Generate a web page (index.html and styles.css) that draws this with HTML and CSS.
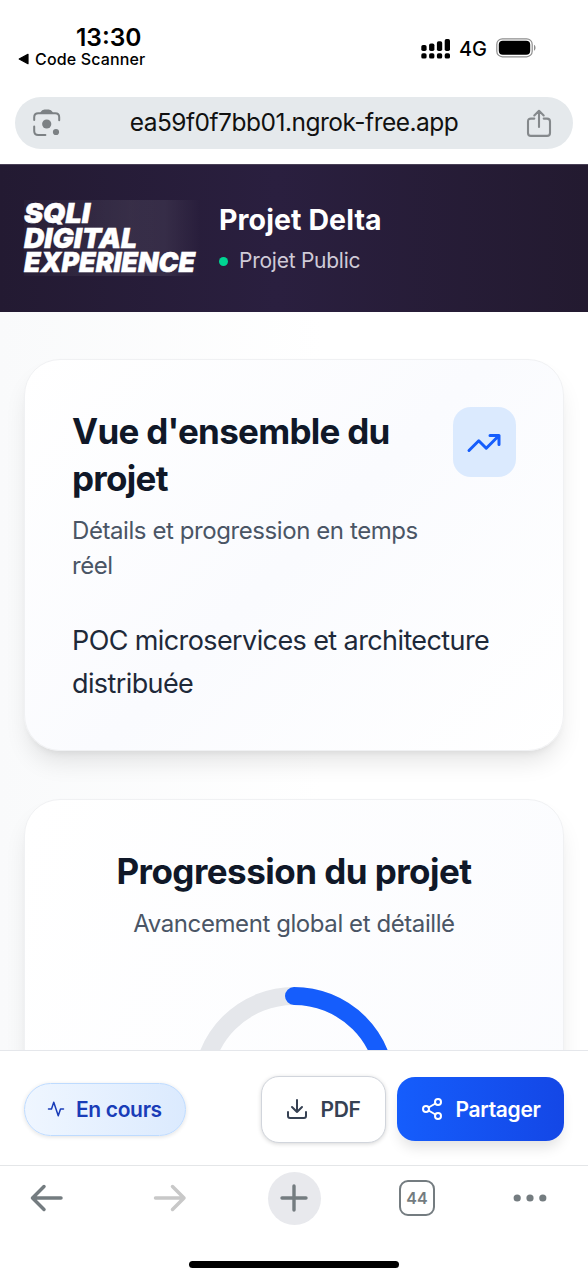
FILE: index.html
```html
<!DOCTYPE html>
<html lang="fr">
<head>
<meta charset="utf-8">
<title>Projet Delta</title>
<link rel="stylesheet" href="styles.css">
</head>
<body>
<div class="phone">
  <div class="status">
    <div class="status-left">
      <div class="clock">13:30</div>
      <div class="back-app"><svg width="12" height="12" viewBox="0 0 12 12"><path d="M1.2 6 10 1.3v9.4z" fill="#000" stroke="#000" stroke-width="1.2" stroke-linejoin="round"/></svg><span>Code Scanner</span></div>
    </div>
    <div class="status-right">
      <svg width="30" height="21" viewBox="0 0 30 21"><rect x="0.3" y="7" width="5.300" height="6" rx="1.700"/><rect x="8.1" y="5.6" width="5.300" height="7.4" rx="1.700"/><rect x="15.900" y="3.3" width="5.300" height="9.7" rx="1.700"/><rect x="23.700" y="1" width="5.300" height="12" rx="1.700"/><rect x="0.3" y="15.300" width="5.300" height="5.300" rx="1.700"/><rect x="8.1" y="15.300" width="5.300" height="5.300" rx="1.700"/><rect x="15.900" y="15.300" width="5.300" height="5.300" rx="1.700"/><rect x="23.700" y="15.300" width="5.300" height="5.300" rx="1.700"/></svg>
      <span class="network">4G</span>
      <svg width="40" height="20" viewBox="0 0 40 20"><rect x="0.8" y="0.8" width="35.4" height="18" rx="5.6" fill="none" stroke="#8d8d8d" stroke-width="1.2"/><rect x="2.8" y="2.8" width="31.4" height="14" rx="4"/><path d="M38 6.8c2 .8 2 5.2 0 6z" fill="#8d8d8d"/></svg>
    </div>
  </div>
  <div class="address">
    <svg width="30" height="30" viewBox="0 0 30 30" fill="none" stroke="#7c8184" stroke-width="2" stroke-linecap="round"><path d="M2.2 12V9.300q0-4 4-4h17q4 0 4 4v3M2.2 18.500v4.500q0 4 4 4h7.200"/><path d="M9.500 4.500q1-2 3-2h4.200q2 0 3 2z" fill="#7c8184"/><circle cx="14.700" cy="16" r="4.600" fill="#7c8184" stroke="none"/><circle cx="24" cy="24" r="3.100" fill="#7c8184" stroke="none"/></svg>
    <span class="url">ea59f0f7bb01.ngrok-free.app</span>
    <svg width="26" height="30" viewBox="0 0 26 30" fill="none" stroke="#85898c" stroke-width="2.100" stroke-linecap="round" stroke-linejoin="round"><path d="M8.300 10.600H5q-3 0-3 3v11.300q0 3 3 3h16q3 0 3-3V13.600q0-3-3-3h-3.300M13 19V3.300M8.300 7.500 13 2.800 17.700 7.500"/></svg>
  </div>
  <header class="header">
    <svg class="logo" width="176" height="76" viewBox="0 0 176 76">
      <text x="0" y="22.700" textLength="66" lengthAdjust="spacingAndGlyphs">SQLI</text>
      <text x="0" y="47.500" textLength="113" lengthAdjust="spacingAndGlyphs">DIGITAL</text>
      <text x="0" y="72.200" textLength="171" lengthAdjust="spacingAndGlyphs">EXPERIENCE</text>
    </svg>
    <div class="project">
      <h1>Projet Delta</h1>
      <p><i class="dot"></i>Projet Public</p>
    </div>
  </header>
  <main class="content">
    <section class="card overview">
      <div class="overview-head">
        <div class="overview-text">
          <h2>Vue d'ensemble du projet</h2>
          <p class="sub">Détails et progression en temps réel</p>
        </div>
        <div class="trend"><svg width="36" height="36" viewBox="0 0 24 24" fill="none" stroke="#155dfc" stroke-width="2" stroke-linecap="round" stroke-linejoin="round"><path d="M16 7h6v6M22 7l-8.500 8.500-5-5L2 17"/></svg></div>
      </div>
      <p class="desc">POC microservices et architecture distribuée</p>
    </section>
    <section class="card progress">
      <h2>Progression du projet</h2>
      <p class="sub">Avancement global et détaillé</p>
      <svg class="ring" width="204" height="204" viewBox="0 0 204 204" fill="none" stroke-width="18"><circle cx="102" cy="102" r="92" stroke="#e5e7eb"/><path d="M102 10a92 92 0 0 1 0 184" stroke="#155dfc" stroke-linecap="round"/></svg>
    </section>
  </main>
  <div class="actions">
    <div class="badge"><svg width="18" height="18" viewBox="0 0 24 24" fill="none" stroke="#193cb8" stroke-width="2" stroke-linecap="round" stroke-linejoin="round"><path d="M22 12h-4l-3 9L9 3l-3 9H2"/></svg>En cours</div>
    <button class="btn pdf"><svg width="24" height="24" viewBox="0 0 24 24" fill="none" stroke="#364153" stroke-width="2" stroke-linecap="round" stroke-linejoin="round"><path d="M21 15v4a2 2 0 0 1-2 2H5a2 2 0 0 1-2-2v-4M7 10l5 5 5-5M12 15V3"/></svg>PDF</button>
    <button class="btn share"><svg width="24" height="24" viewBox="0 0 24 24" fill="none" stroke="#fff" stroke-width="2" stroke-linecap="round" stroke-linejoin="round"><circle cx="18" cy="5" r="3"/><circle cx="6" cy="12" r="3"/><circle cx="18" cy="19" r="3"/><path d="m8.590 13.510 6.830 3.980M15.410 6.510l-6.820 3.980"/></svg>Partager</button>
  </div>
  <nav class="toolbar">
    <div class="tools">
      <svg width="34" height="28" viewBox="0 0 34 28" fill="none" stroke="#747c80" stroke-width="3.500" stroke-linecap="round" stroke-linejoin="round"><path d="M31 14H2.500M14 2.500 2.500 14l11.500 11.500"/></svg>
      <svg width="34" height="28" viewBox="0 0 34 28" fill="none" stroke="#c8c8c8" stroke-width="3.500" stroke-linecap="round" stroke-linejoin="round"><path d="M2.500 14H31M19.500 2.500 31 14 19.500 25.500"/></svg>
      <div class="plus"><svg width="28" height="28" viewBox="0 0 28 28" stroke="#747c80" stroke-width="3.400" stroke-linecap="round"><path d="M2 14h24M14 2v24"/></svg></div>
      <div class="tabs">44</div>
      <svg width="34" height="8" viewBox="0 0 34 8" fill="#747c80"><circle cx="4.200" cy="4" r="3.600"/><circle cx="17" cy="4" r="3.600"/><circle cx="29.800" cy="4" r="3.600"/></svg>
    </div>
    <div class="home"></div>
  </nav>
</div>
</body>
</html>
```

FILE: styles.css
```css
* { box-sizing: border-box; }
body, h1, h2, p { margin: 0; }
svg { display: block; flex: none; }
body {
  background: #fff;
  font-family: Inter, "Liberation Sans", sans-serif;
}
.phone {
  width: 588px;
  height: 1280px;
  display: flex;
  flex-direction: column;
  overflow: hidden;
}
.status {
  height: 97px;
  flex: none;
  display: flex;
  justify-content: space-between;
  padding: 22px 52px 0 18px;
  color: #000;
}
.clock {
  margin-left: 58px;
  font-size: 24.500px;
  line-height: 31px;
  font-weight: 600;
}
.back-app {
  display: flex;
  align-items: center;
  gap: 5px;
  font-size: 16px;
  line-height: 11px;
  font-weight: 500;
  letter-spacing: 0.15px;
}
.status-right {
  display: flex;
  align-items: center;
  height: 52px;
}
.network {
  margin: 0 9px 0 8px;
  font-size: 20px;
  line-height: 24px;
  padding-top: 1px;
  font-weight: 500;
}
.address {
  flex: none;
  height: 52px;
  margin: 0 15px 15px;
  padding: 0 21px 0 17px;
  border-radius: 26px;
  background: #e5e9ec;
  display: flex;
  align-items: center;
  justify-content: space-between;
}
.url {
  padding-bottom: 2px;
  font-size: 24.500px;
  line-height: 30px;
  letter-spacing: -0.500px;
  color: #111;
  white-space: nowrap;
}
.header {
  flex: none;
  height: 148px;
  padding: 0 24px;
  display: flex;
  align-items: center;
  background: linear-gradient(90deg, #231a32 0%, #2a1f3f 47%, #231a30 100%);
  border-top: 1px solid #494056;
}
.logo {
  margin: 0 19px 2px 0;
  overflow: visible;
  background: linear-gradient(90deg, rgba(255,255,255,.02), rgba(255,255,255,.08) 60%, rgba(255,255,255,.07) 80%, transparent);
}
.logo text {
  font-family: Inter, sans-serif;
  font-weight: 900;
  font-style: italic;
  font-size: 27.500px;
  fill: #fff;
  stroke: #fff;
  stroke-width: 0.500px;
}
.project h1 {
  color: #fff;
  font-size: 28.500px;
  line-height: 38px;
  font-weight: 700;
  letter-spacing: 0.100px;
}
.project p {
  display: flex;
  align-items: center;
  margin-top: 7px;
  color: #d0cbd8;
  font-size: 21px;
  line-height: 30px;
  letter-spacing: -0.250px;
}
.dot {
  width: 9px;
  height: 9px;
  border-radius: 50%;
  background: #00d492;
  margin-right: 11px;
}
.content {
  flex: none;
  height: 738px;
  overflow: hidden;
  padding: 47px 24px 0;
  display: flex;
  flex-direction: column;
  gap: 48px;
  background: linear-gradient(90deg, #f9fafb, #fff 55%);
}
.card {
  flex: none;
  border: 1.500px solid #f0f1f3;
  border-radius: 36px;
  background: linear-gradient(135deg, #fff 0%, #fafbfe 50%, #fff 100%);
  box-shadow: 0 15px 23px -4px rgba(0,0,0,.1), 0 6px 9px -6px rgba(0,0,0,.1);
}
.overview {
  height: 392px;
  padding: 47px;
}
.overview-head {
  display: flex;
  justify-content: space-between;
  align-items: flex-start;
}
.overview-text { width: 360px; }
h2 {
  padding-top: 1px;
  color: #101828;
  font-size: 35px;
  line-height: 47px;
  font-weight: 700;
  letter-spacing: -0.620px;
}
.overview h2 { letter-spacing: -0.720px; }
.progress h2 { letter-spacing: -0.530px; }
.sub {
  color: #4a5565;
  font-size: 24px;
  line-height: 35px;
  letter-spacing: -0.420px;
}
.overview .sub { margin-top: 11px; }
.trend {
  width: 63px;
  height: 70px;
  padding: 1px 1px 0 0;
  border-radius: 18px;
  background: #dbeafe;
  display: flex;
  align-items: center;
  justify-content: center;
}
.desc {
  margin-top: 36px;
  color: #1e2939;
  font-size: 27px;
  line-height: 43px;
  letter-spacing: -0.600px;
}
.progress {
  height: 600px;
  padding: 47px;
  display: flex;
  flex-direction: column;
  align-items: center;
  background: linear-gradient(110deg, #fff 0%, #fafbfe 100%);
}
.progress .sub { margin-top: 11px; white-space: nowrap; }
.ring { margin-top: 45px; }
.actions {
  flex: none;
  height: 115px;
  padding: 2px 24px 0;
  border-top: 1.500px solid #e5e7eb;
  background: #fff;
  display: flex;
  align-items: center;
}
.badge {
  width: 162px;
  height: 53px;
  margin-right: auto;
  padding-left: 22px;
  display: flex;
  align-items: center;
  gap: 11px;
  border: 1.500px solid #bedbff;
  border-radius: 27px;
  background: linear-gradient(90deg, #eff6ff, #dbeafe);
  box-shadow: 0 1px 4px rgba(0,0,0,.12);
  color: #193cb8;
  font-size: 21px;
  font-weight: 600;
  letter-spacing: -0.350px;
}
.btn {
  display: flex;
  align-items: center;
  justify-content: center;
  gap: 11px;
  padding: 0;
  border: 0;
  border-radius: 18px;
  font-family: inherit;
  font-size: 21px;
  font-weight: 600;
  letter-spacing: -0.300px;
}
.pdf {
  width: 125px;
  height: 67px;
  border: 1.500px solid #d1d5dc;
  background: #fff;
  color: #364153;
  box-shadow: 0 1px 4px rgba(0,0,0,.16);
}
.share {
  width: 167px;
  height: 64px;
  margin-left: 11.500px;
  color: #fff;
  background: linear-gradient(90deg, #155dfc, #1447e6);
  box-shadow: 0 9px 14px -3px rgba(0,0,0,.12);
}
.toolbar {
  flex: none;
  height: 115px;
  border-top: 1px solid #e4e6e8;
}
.tools {
  height: 64px;
  display: grid;
  grid-template-columns: 94px 152px 96px 150px 75px;
  align-items: center;
  justify-items: center;
}
.plus {
  width: 53px;
  height: 53px;
  border-radius: 50%;
  background: #e8e9ed;
  display: flex;
  align-items: center;
  justify-content: center;
}
.tabs {
  width: 36px;
  height: 36px;
  border: 2.500px solid #747c80;
  border-radius: 9px;
  color: #747c80;
  font-size: 16px;
  line-height: 32px;
  font-weight: 600;
  text-align: center;
}
.home {
  width: 210px;
  height: 7px;
  margin: 31px auto 0;
  border-radius: 4px;
  background: #000;
}
```
